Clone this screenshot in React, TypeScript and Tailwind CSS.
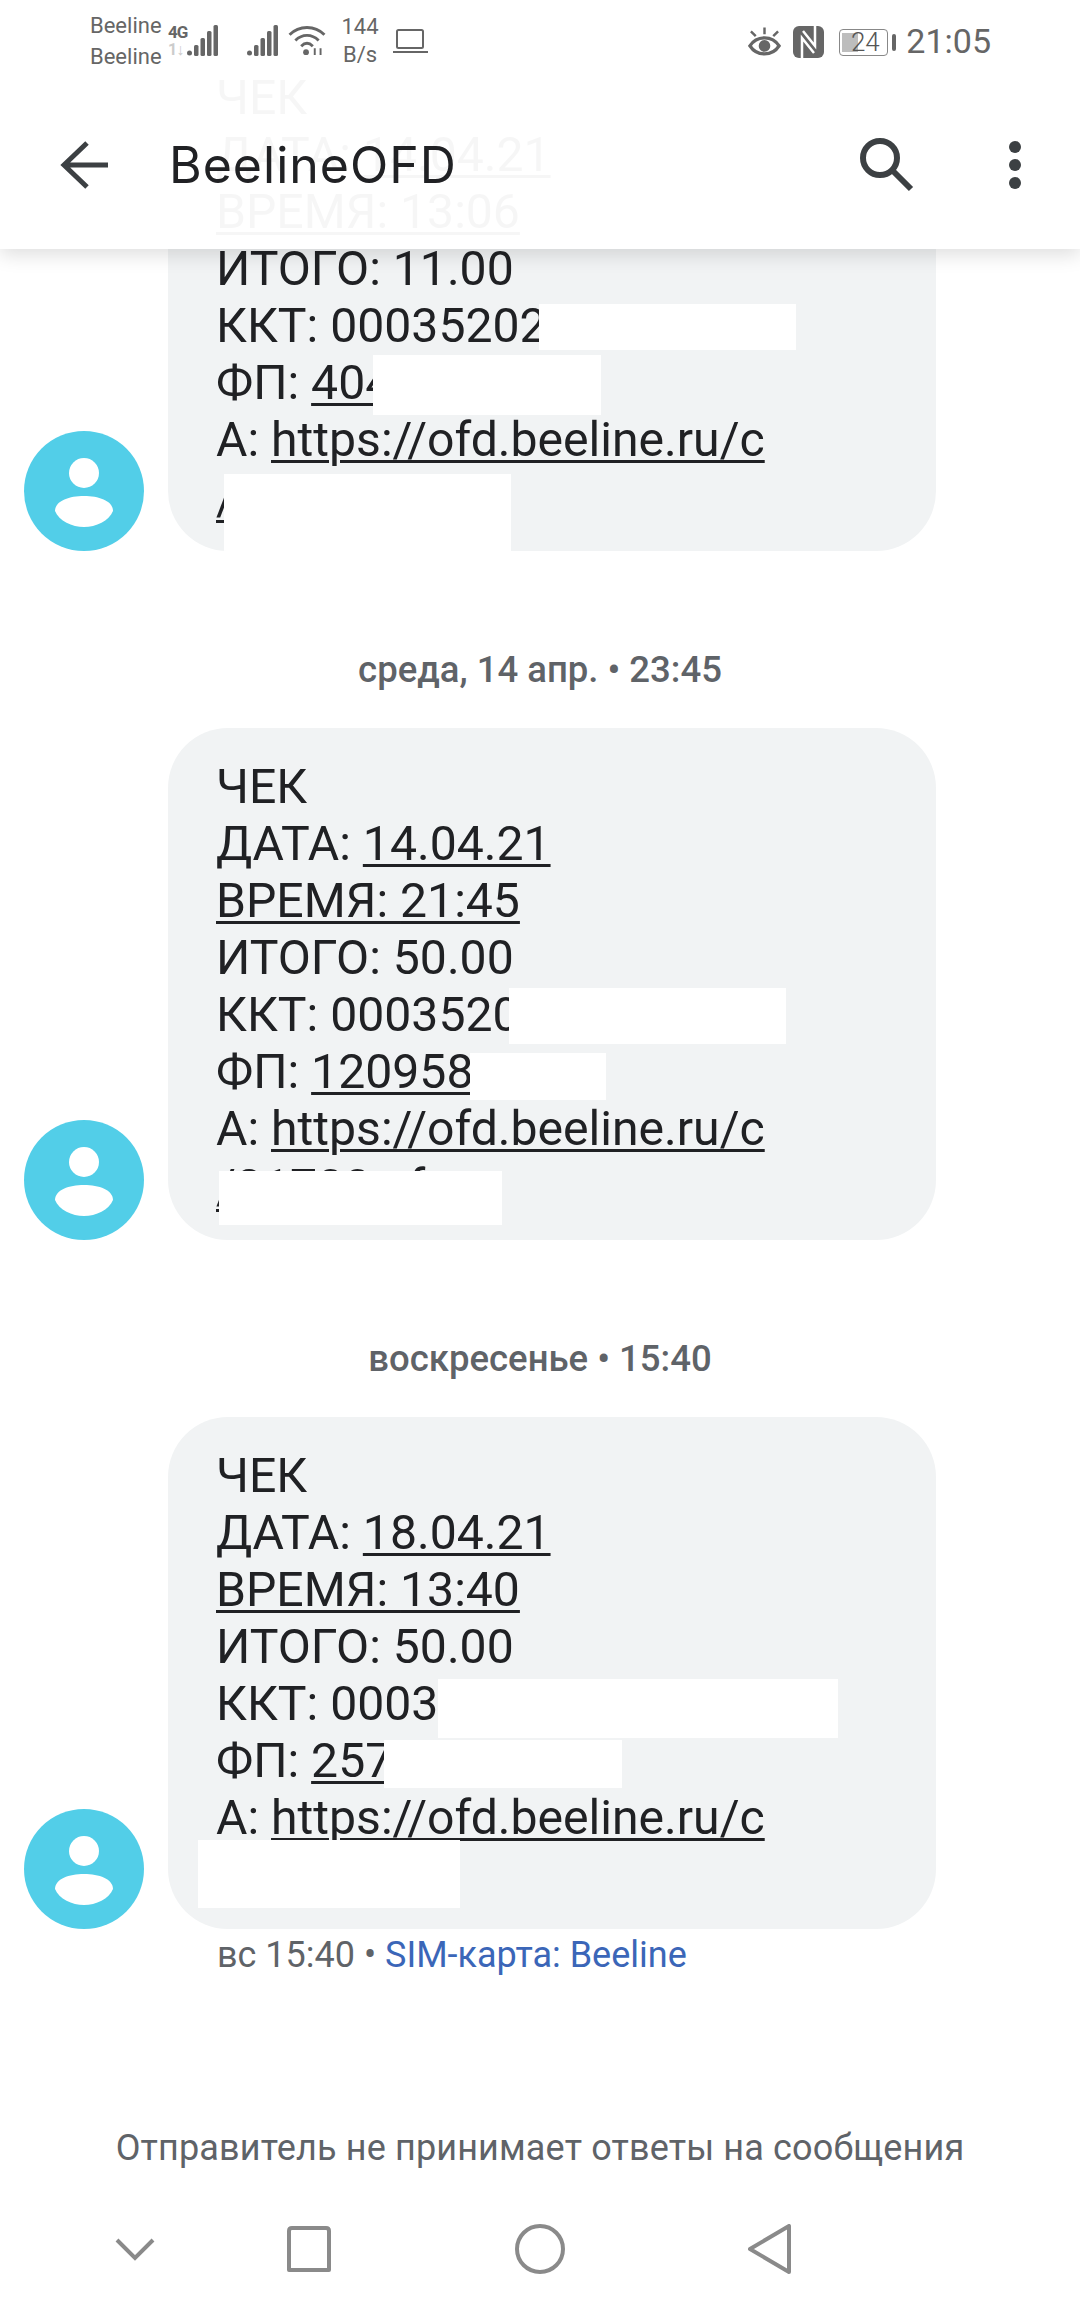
const Signal = ({ className }: { className: string }) => (
  <svg viewBox="0 0 31 31" className={className} fill="#666">
    <circle cx="2.5" cy="28" r="2.5" />
    <rect x="7" y="20" width="4.5" height="11" rx="1.5" />
    <rect x="13.5" y="13" width="4.5" height="18" rx="1.5" />
    <rect x="20" y="6" width="4.5" height="25" rx="1.5" />
    <rect x="26.5" y="0" width="4.5" height="31" rx="1.5" />
  </svg>
);

const StatusBar = () => (
  <div className="flex h-[84px] items-start pl-[90px] pr-[89px] pt-[10px] text-[#666]">
    <div className="flex w-[78px] flex-col text-[22px] leading-[31px]">
      <span>Beeline</span>
      <span>Beeline</span>
    </div>
    <div className="relative mt-[15px] h-[31px] w-[50px]">
      <span className="absolute left-0 top-[-1px] text-[17px] font-bold leading-[17px] tracking-[-1px]">4G</span>
      <span className="absolute bottom-[-2px] left-0 text-[16px] font-bold leading-[16px] tracking-[-1px] text-[#ccc]">1↓</span>
      <Signal className="absolute right-0 top-0 h-[31px] w-[31px]" />
    </div>
    <Signal className="ml-[28px] mt-[15px] h-[31px] w-[33px]" />
    <svg viewBox="0 0 38 32" className="ml-[9px] mt-[15px] h-[31px] w-[38px]" fill="none" stroke="#666" strokeWidth="3">
      <path d="M1 10C11 0 27 0 37 10" />
      <path d="M7 16C14 9 24 9 31 16" />
      <path d="M13 22C17 18 21 18 25 22" />
      <circle cx="18" cy="28" r="3" fill="#666" stroke="none" />
      <path d="M27 31V24M33 31V24" strokeWidth="2" />
    </svg>
    <div className="ml-[15px] mt-[3px] flex w-[38px] flex-col items-center text-[22px] leading-[28px]">
      <span>144</span>
      <span>B/s</span>
    </div>
    <svg viewBox="0 0 35 25" className="ml-[14px] mt-[19px] h-[25px] w-[35px]" fill="none" stroke="#666" strokeWidth="2">
      <rect x="4" y="1" width="26" height="18" rx="1.5" />
      <path d="M0 23H35" />
    </svg>
    <div className="ml-auto flex items-center">
      <svg viewBox="0 0 34 31" className="mt-[13px] h-[31px] w-[33px]" fill="none" stroke="#666" strokeWidth="3.5">
        <path d="M2 19C9 8 25 8 32 19C25 30 9 30 2 19Z" />
        <circle cx="17" cy="19" r="6" fill="#666" stroke="none" />
        <path d="M17 7V0M8 9L3 4M26 9L31 4" strokeWidth="2.5" />
      </svg>
      <svg viewBox="0 0 31 32" className="ml-[12px] mt-[13px] h-[32px] w-[31px]" fill="none" stroke="#fff" strokeWidth="2.5">
        <rect width="31" height="32" rx="6" fill="#666" stroke="none" />
        <path d="M9 32V12L21 27" />
        <path d="M22 0V20L10 5" />
      </svg>
      <div className="relative ml-[15px] mt-[13px] h-[27px] w-[49px] rounded-[4px] border-[1.5px] border-[#888]">
        <div className="absolute bottom-[3px] left-[2px] top-[3px] w-[16px] bg-[#bdbdbd]" />
        <span className="absolute inset-0 pl-[3px] text-center text-[26px] font-light leading-[24px] text-[#555]">24</span>
      </div>
      <div className="ml-[4px] mt-[13px] h-[17px] w-[4px] rounded-[2px] bg-[#666]" />
      <span className="ml-[10px] mt-[11px] text-[34px] leading-[40px]">21:05</span>
    </div>
  </div>
);

const Toolbar = () => (
  <div className="flex h-[165px] items-center pb-[3px] pl-[60px] pr-[59px]">
    <svg viewBox="0 0 48 48" className="h-[48px] w-[48px]" fill="none" stroke="#3c4043" strokeWidth="5">
      <path d="M48 24H4M27 2L4 24L27 46" />
    </svg>
    <span className="ml-[61px] font-['Inter',sans-serif] text-[50px] leading-[60px] tracking-[1px] text-[#202124]">BeelineOFD</span>
    <svg viewBox="0 0 54 54" className="ml-auto h-[54px] w-[54px]" fill="none" stroke="#3c4043" strokeWidth="6">
      <circle cx="20" cy="20" r="17" />
      <path d="M32 32L51 51" />
    </svg>
    <svg viewBox="0 0 12 48" className="ml-[95px] h-[48px] w-[12px]" fill="#3c4043">
      <circle cx="6" cy="6" r="6" />
      <circle cx="6" cy="24" r="6" />
      <circle cx="6" cy="42" r="6" />
    </svg>
  </div>
);

const Avatar = () => (
  <svg viewBox="0 0 120 120" className="h-[120px] w-[120px] shrink-0">
    <circle cx="60" cy="60" r="60" fill="#52cee8" />
    <circle cx="60" cy="42" r="15" fill="#fff" />
    <path d="M31 80C31 70 45 65 60 65C75 65 89 70 89 80C85 90 72 96 60 96C48 96 35 90 31 80Z" fill="#fff" />
  </svg>
);

type Receipt = {
  date: string;
  time: string;
  total: string;
  kkt: string;
  fp: string;
  tail: string;
  masks: string[];
};

const receipts: Receipt[] = [
  {
    date: "14.04.21",
    time: "13:06",
    total: "11.00",
    kkt: "000352020000",
    fp: "404000",
    tail: "/",
    masks: [
      "left-[371px] top-[265px] h-[46px] w-[257px]",
      "left-[205px] top-[316px] h-[60px] w-[228px]",
      "left-[56px] top-[435px] h-[77px] w-[287px]",
    ],
  },
  {
    date: "14.04.21",
    time: "21:45",
    total: "50.00",
    kkt: "000352000000",
    fp: "120958",
    tail: "/21700 ef",
    masks: [
      "left-[341px] top-[260px] h-[56px] w-[277px]",
      "left-[302px] top-[325px] h-[47px] w-[136px]",
      "left-[51px] top-[443px] h-[54px] w-[283px]",
    ],
  },
  {
    date: "18.04.21",
    time: "13:40",
    total: "50.00",
    kkt: "000300000000",
    fp: "257000",
    tail: "",
    masks: [
      "left-[270px] top-[262px] h-[59px] w-[400px]",
      "left-[216px] top-[323px] h-[48px] w-[238px]",
      "left-[30px] top-[423px] h-[68px] w-[262px]",
    ],
  },
];

const link = "underline decoration-[3px] underline-offset-[4px]";

const Message = ({ r }: { r: Receipt }) => (
  <div className="flex items-end pl-[24px]">
    <Avatar />
    <div className="relative ml-[24px] h-[512px] w-[768px] overflow-hidden rounded-[60px] bg-[#f1f3f4] pl-[48px] pr-[49px] pt-[30px] text-[48.15px] leading-[57px] text-[#202124]">
      <div>ЧЕК</div>
      <div>
        ДАТА: <span className={link}>{r.date}</span>
      </div>
      <div>
        <span className={link}>ВРЕМЯ: {r.time}</span>
      </div>
      <div>ИТОГО: {r.total}</div>
      <div>ККТ: {r.kkt}</div>
      <div>
        ФП: <span className={link}>{r.fp}</span>
      </div>
      <div>
        А: <span className={link}>https://ofd.beeline.ru/c</span>
      </div>
      <div className="mt-[1px]">
        <span className="underline decoration-[3px] underline-offset-[6px]">{r.tail}</span>
      </div>
      {r.masks.map((m) => (
        <div key={m} className={`absolute bg-white ${m}`} />
      ))}
    </div>
  </div>
);

const Separator = ({ text }: { text: string }) => (
  <div className="h-[177px] pt-[98px] text-center text-[36.5px] font-medium leading-[42px] text-[#5f6368]">
    {text}
  </div>
);

export default function App() {
  return (
    <div className="relative h-[2312px] w-[1080px] overflow-hidden bg-white font-['Roboto',sans-serif]">
      <div className="pt-[39px]">
        <Message r={receipts[0]} />
        <Separator text="среда, 14 апр. • 23:45" />
        <Message r={receipts[1]} />
        <Separator text="воскресенье • 15:40" />
        <Message r={receipts[2]} />
        <div className="pl-[217px] pt-[6px] text-[36px] leading-[40px] text-[#5f6368]">
          вс 15:40 • <span className="text-[#3b66b8]">SIM-карта: Beeline</span>
        </div>
        <div className="pt-[153px] text-center text-[36px] leading-[40px] tracking-[0.15px] text-[#5f6368]">
          Отправитель не принимает ответы на сообщения
        </div>
        <div className="flex items-center pl-[115px] pt-[56px]">
          <svg viewBox="0 0 40 24" className="h-[24px] w-[40px]" fill="none" stroke="#8a8a8a" strokeWidth="4">
            <path d="M2 3L20 21L38 3" />
          </svg>
          <svg viewBox="0 0 44 46" className="ml-[132px] h-[46px] w-[44px]" fill="none" stroke="#8a8a8a" strokeWidth="4">
            <path d="M2 5Q2 2 5 2H39Q42 2 42 5V44H2Z" strokeLinejoin="round" />
          </svg>
          <svg viewBox="0 0 50 50" className="ml-[184px] h-[50px] w-[50px]" fill="none" stroke="#8a8a8a" strokeWidth="4">
            <circle cx="25" cy="25" r="23" />
          </svg>
          <svg viewBox="0 0 43 50" className="ml-[183px] h-[50px] w-[43px]" fill="none" stroke="#8a8a8a" strokeWidth="4" strokeLinejoin="round">
            <path d="M41 2V48L2 25Z" />
          </svg>
        </div>
      </div>
      <div className="absolute inset-x-0 top-0 h-[249px] bg-white/[0.96] shadow-[0_6px_18px_rgba(0,0,0,0.13)]">
        <StatusBar />
        <Toolbar />
      </div>
    </div>
  );
}
